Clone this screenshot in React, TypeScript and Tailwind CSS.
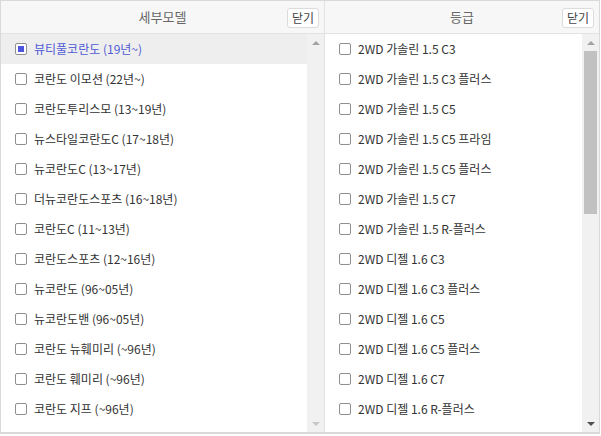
const models = [
  "뷰티풀코란도 (19년~)",
  "코란도 이모션 (22년~)",
  "코란도투리스모 (13~19년)",
  "뉴스타일코란도C (17~18년)",
  "뉴코란도C (13~17년)",
  "더뉴코란도스포츠 (16~18년)",
  "코란도C (11~13년)",
  "코란도스포츠 (12~16년)",
  "뉴코란도 (96~05년)",
  "뉴코란도밴 (96~05년)",
  "코란도 뉴훼미리 (~96년)",
  "코란도 훼미리 (~96년)",
  "코란도 지프 (~96년)",
];

const grades = [
  "2WD 가솔린 1.5 C3",
  "2WD 가솔린 1.5 C3 플러스",
  "2WD 가솔린 1.5 C5",
  "2WD 가솔린 1.5 C5 프라임",
  "2WD 가솔린 1.5 C5 플러스",
  "2WD 가솔린 1.5 C7",
  "2WD 가솔린 1.5 R-플러스",
  "2WD 디젤 1.6 C3",
  "2WD 디젤 1.6 C3 플러스",
  "2WD 디젤 1.6 C5",
  "2WD 디젤 1.6 C5 플러스",
  "2WD 디젤 1.6 C7",
  "2WD 디젤 1.6 R-플러스",
];

const Header = ({ title }: { title: string }) => (
  <div className="relative h-[33px] flex items-center justify-center bg-[#f7f7f7] border-b border-[#e2e2e2]">
    <span className="text-[13px] text-[#666]">{title}</span>
    <button className="absolute right-[5px] top-[7px] h-[20px] px-[4px] bg-white border border-[#dcdcdc] rounded-[3px] text-[12px] leading-none text-[#444]">
      닫기
    </button>
  </div>
);

const Scrollbar = ({ thumb, downLight }: { thumb?: boolean; downLight?: boolean }) => (
  <div className="w-[17px] bg-[#f1f1f1] flex flex-col items-center">
    <div className="h-[17px] flex items-center justify-center">
      <div className="w-0 h-0 border-x-[4px] border-x-transparent border-b-[4px] border-b-[#a3a3a3]" />
    </div>
    <div className="flex-1 w-full px-[2px]">
      {thumb && <div className="h-[163px] bg-[#c1c1c1]" />}
    </div>
    <div className="h-[17px] flex items-center justify-center">
      <div
        className={
          downLight
            ? "w-0 h-0 border-x-[4px] border-x-transparent border-t-[4px] border-t-[#c8c8c8]"
            : "w-0 h-0 border-x-[4px] border-x-transparent border-t-[4px] border-t-[#505050]"
        }
      />
    </div>
  </div>
);

const Row = ({ label, checked }: { label: string; checked?: boolean }) => (
  <div
    className={
      checked
        ? "h-[30px] flex items-center pl-[14px] gap-[7px] bg-[#eeeeee]"
        : "h-[30px] flex items-center pl-[14px] gap-[7px]"
    }
  >
    <span className="w-[12px] h-[12px] border border-[#8f8f8f] rounded-[2px] bg-white flex items-center justify-center shrink-0">
      {checked && <span className="w-[6px] h-[6px] bg-[#4d55e0]" />}
    </span>
    <span className={checked ? "text-[12px] text-[#4f5bd5]" : "text-[12px] text-[#333]"}>{label}</span>
  </div>
);

export default function App() {
  return (
    <div
      className="w-[600px] h-[434px] flex border border-[#d9d9d9] border-b-2 bg-white"
      style={{ fontFamily: '"Malgun Gothic", "Noto Sans CJK KR", sans-serif' }}
    >
      <div className="w-[324px] flex flex-col border-r border-[#e2e2e2]">
        <Header title="세부모델" />
        <div className="flex-1 flex min-h-0">
          <div className="flex-1 overflow-hidden">
            {models.map((m, i) => (
              <Row key={m} label={m} checked={i === 0} />
            ))}
          </div>
          <Scrollbar downLight />
        </div>
      </div>
      <div className="flex-1 flex flex-col">
        <Header title="등급" />
        <div className="flex-1 flex min-h-0">
          <div className="flex-1 overflow-hidden">
            {grades.map((g) => (
              <Row key={g} label={g} />
            ))}
          </div>
          <Scrollbar thumb />
        </div>
      </div>
    </div>
  );
}
